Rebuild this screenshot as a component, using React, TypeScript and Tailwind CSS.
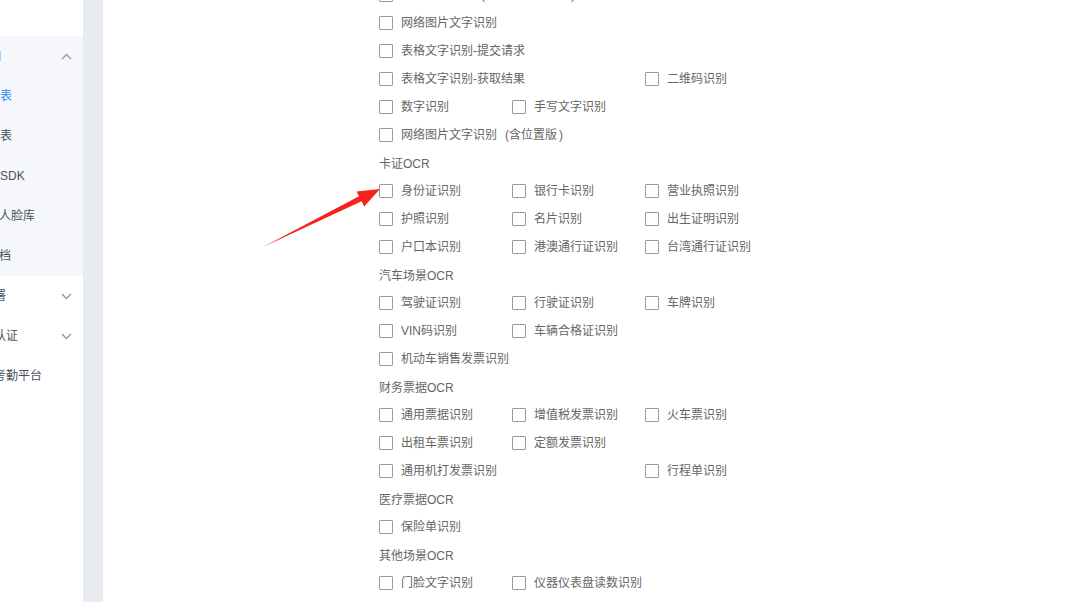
import React from "react";

type Item = [number, string];
type Row = { title?: string; items?: Item[] };

const rows: Row[] = [
  { items: [[1, "通用文字识别（高精度含位置版）"]] },
  { items: [[1, "网络图片文字识别"]] },
  { items: [[1, "表格文字识别-提交请求"]] },
  { items: [[1, "表格文字识别-获取结果"], [3, "二维码识别"]] },
  { items: [[1, "数字识别"], [2, "手写文字识别"]] },
  { items: [[1, "网络图片文字识别（含位置版）"]] },
  { title: "卡证OCR" },
  { items: [[1, "身份证识别"], [2, "银行卡识别"], [3, "营业执照识别"]] },
  { items: [[1, "护照识别"], [2, "名片识别"], [3, "出生证明识别"]] },
  { items: [[1, "户口本识别"], [2, "港澳通行证识别"], [3, "台湾通行证识别"]] },
  { title: "汽车场景OCR" },
  { items: [[1, "驾驶证识别"], [2, "行驶证识别"], [3, "车牌识别"]] },
  { items: [[1, "VIN码识别"], [2, "车辆合格证识别"]] },
  { items: [[1, "机动车销售发票识别"]] },
  { title: "财务票据OCR" },
  { items: [[1, "通用票据识别"], [2, "增值税发票识别"], [3, "火车票识别"]] },
  { items: [[1, "出租车票识别"], [2, "定额发票识别"]] },
  { items: [[1, "通用机打发票识别"], [3, "行程单识别"]] },
  { title: "医疗票据OCR" },
  { items: [[1, "保险单识别"]] },
  { title: "其他场景OCR" },
  { items: [[1, "门脸文字识别"], [2, "仪器仪表盘读数识别"]] },
];

const colClass: Record<number, string> = {
  1: "col-start-1",
  2: "col-start-2",
  3: "col-start-3",
};

function Label({ text }: { text: string }) {
  const parts = text.split(/([（）])/);
  return (
    <span className="ml-[8px]">
      {parts.map((p, i) =>
        p === "（" ? (
          <span key={i} className="inline-block w-[12px] text-right">(</span>
        ) : p === "）" ? (
          <span key={i} className="inline-block w-[12px] text-left pl-[2px]">)</span>
        ) : (
          <React.Fragment key={i}>{p}</React.Fragment>
        )
      )}
    </span>
  );
}

function Chevron({ up }: { up?: boolean }) {
  return (
    <svg width="11" height="7" viewBox="0 0 11 7" className="shrink-0">
      <polyline
        points={up ? "1,6 5.5,1.5 10,6" : "1,1 5.5,5.5 10,1"}
        fill="none"
        stroke="#999"
        strokeWidth="1.4"
      />
    </svg>
  );
}

function SideItem({
  text,
  ml,
  blue,
  chevron,
}: {
  text: string;
  ml: string;
  blue?: boolean;
  chevron?: boolean;
}) {
  return (
    <div className="h-[40px] flex items-center justify-between pr-[11px] whitespace-nowrap">
      <span className={`${ml} ${blue ? "text-[#2d8cf0]" : "text-[#495060]"}`}>{text}</span>
      {chevron && <Chevron />}
    </div>
  );
}

export default function App() {
  return (
    <div
      className="relative flex w-[1092px] h-[602px] overflow-hidden bg-white text-[12px]"
      style={{ fontFamily: '"Liberation Sans", "Noto Sans CJK SC", sans-serif' }}
    >
      {/* sidebar */}
      <div className="w-[83px] shrink-0 h-full bg-white overflow-hidden">
        <div className="h-[36px]" />
        <div className="bg-[#f5f7fa]">
          <div className="h-[40px] flex items-center justify-between pr-[11px]">
            <div className="w-[1px] h-[10px] bg-[#9fd3ff]" />
            <Chevron up />
          </div>
          <SideItem text="应用列表" ml="ml-[-36px]" blue />
          <SideItem text="人员列表" ml="ml-[-36px]" />
          <SideItem text="下载SDK" ml="ml-[-24px]" />
          <SideItem text="公共人脸库" ml="ml-[-25px]" />
          <SideItem text="帮助文档" ml="ml-[-37px]" />
        </div>
        <SideItem text="部署" ml="ml-[-18px]" chevron />
        <SideItem text="实名认证" ml="ml-[-30px]" chevron />
        <SideItem text="智能考勤平台" ml="ml-[-30px]" />
      </div>

      {/* gray strip */}
      <div className="w-[20px] shrink-0 h-full bg-[#e8ebf0]" />

      {/* content */}
      <div className="flex-1 h-full bg-white overflow-hidden">
        <div className="mt-[-19px] pl-[276px] text-[#666]">
          {rows.map((r, i) =>
            r.title ? (
              <div key={i} className="h-[28px] flex items-center whitespace-nowrap pt-[1px]">
                {r.title}
              </div>
            ) : (
              <div key={i} className="h-[28px] grid grid-cols-[133px_133px_133px] items-center">
                {r.items!.map(([c, label]) => (
                  <div key={label} className={`${colClass[c]} flex items-center whitespace-nowrap`}>
                    <span className="w-[14px] h-[14px] border border-[#9a9a9a] bg-white rounded-[1px] shrink-0" />
                    <Label text={label} />
                  </div>
                ))}
              </div>
            )
          )}
        </div>
      </div>

      {/* red arrow annotation */}
      <svg
        className="absolute left-0 top-0 pointer-events-none"
        width="1092"
        height="602"
        viewBox="0 0 1092 602"
      >
        <polygon
          points="263,247 361.6,201.3 364.2,206.5 380,189 356.6,191.4 359.0,196.2"
          fill="#f5231b"
        />
      </svg>
    </div>
  );
}
